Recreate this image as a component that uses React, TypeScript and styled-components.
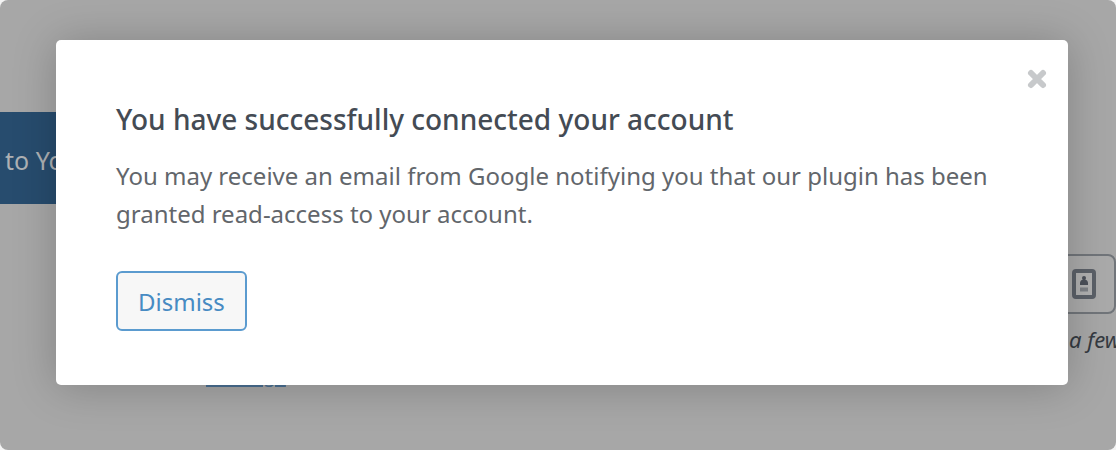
import React from "react";
import styled, { createGlobalStyle } from "styled-components";

const GlobalStyle = createGlobalStyle`
  *, *::before, *::after { box-sizing: border-box; }
  body {
    margin: 0;
    background: #f4f4f4;
    font-family: "Noto Sans", "Open Sans", sans-serif;
    font-size: 24px;
  }
  h2, p { margin: 0; }
`;

const Screen = styled.div`
  display: grid;
  min-height: 100vh;
  overflow: hidden;
  border-radius: 8px;
  background: #a7a7a7;
`;

const Page = styled.main`
  grid-area: 1 / 1;
  display: grid;
  grid-template-columns: 1fr 160px;
  min-width: 0;
  overflow: hidden;
`;

const Column = styled.div`
  display: flex;
  flex-direction: column;
  align-items: flex-start;
`;

const ConnectButton = styled.button`
  height: 92px;
  margin-top: 112px;
  padding: 4px 5px 0;
  border: 0;
  background: #274c6e;
  color: #aeb1b4;
  font: inherit;
  font-size: 25px;
  line-height: 36px;
  white-space: nowrap;
`;

const HelpLink = styled.a`
  margin: 157px 0 0 206px;
  color: #4a6f92;
  font-size: 21px;
  line-height: 26px;
  text-decoration: underline 2px;
  text-underline-offset: 3px;
`;

const SideColumn = styled.div`
  display: flex;
  flex-direction: column;
  gap: 8px;
  padding-top: 254px;
`;

const Field = styled.div`
  display: flex;
  align-items: center;
  justify-content: flex-end;
  height: 60px;
  padding-right: 18px;
  border: 2px solid #71757a;
  border-radius: 8px;
  background: #aaaaaa;
`;

const Hint = styled.p`
  padding-left: 113px;
  color: #353a41;
  font-size: 22px;
  font-style: italic;
  line-height: 34px;
  white-space: nowrap;
`;

const Dialog = styled.section`
  position: relative;
  grid-area: 1 / 1;
  align-self: start;
  display: flex;
  flex-direction: column;
  align-items: flex-start;
  margin: 40px 48px 40px 56px;
  padding: 60px 60px 54px;
  border-radius: 5px;
  background: #ffffff;
  box-shadow: 0 2px 44px rgba(0, 0, 0, 0.22);
`;

const CloseButton = styled.button`
  position: absolute;
  top: 28px;
  right: 20px;
  display: flex;
  padding: 0;
  border: 0;
  background: transparent;
  color: #c7c9cb;
`;

const Title = styled.h2`
  color: #444b54;
  font-size: 28px;
  font-weight: 500;
  line-height: 38px;
`;

const Message = styled.p`
  margin-top: 19px;
  color: #62666b;
  line-height: 38px;
`;

const DismissButton = styled.button`
  height: 60px;
  margin-top: 38px;
  padding: 0 20px;
  border: 2px solid #5b9bcf;
  border-radius: 6px;
  background: #f7f7f7;
  color: #478bc3;
  font: inherit;
`;

const CloseIcon = () => (
  <svg width="22" height="22" viewBox="0 0 22 22" aria-hidden="true">
    <path d="M5 5L17 17M17 5L5 17" stroke="currentColor" strokeWidth="6" strokeLinecap="round" />
  </svg>
);

const ContactIcon = () => (
  <svg width="24" height="30" viewBox="0 0 24 30" aria-hidden="true">
    <rect x="2" y="2" width="20" height="26" rx="2" fill="#b0b0b0" stroke="#5b6068" strokeWidth="4" />
    <circle cx="12" cy="9" r="2" fill="#4b5059" />
    <path d="M8 16v-2q0-3 4-4q4 1 4 4v2Z" fill="#4b5059" />
    <path d="M8 18.500h8v4H8Z" fill="#7d8085" />
  </svg>
);

export default function App() {
  return (
    <>
      <GlobalStyle />
      <Screen>
        <Page>
          <Column>
            <ConnectButton type="button">to Your</ConnectButton>
            <HelpLink href="#settings">Settings</HelpLink>
          </Column>
          <SideColumn>
            <Field><ContactIcon /></Field>
            <Hint>a few</Hint>
          </SideColumn>
        </Page>
        <Dialog role="dialog" aria-modal="true" aria-labelledby="dialog-title">
          <CloseButton type="button" aria-label="Close"><CloseIcon /></CloseButton>
          <Title id="dialog-title">You have successfully connected your account</Title>
          <Message>
            You may receive an email from Google notifying you that our plugin has been granted read-access to your account.
          </Message>
          <DismissButton type="button">Dismiss</DismissButton>
        </Dialog>
      </Screen>
    </>
  );
}
